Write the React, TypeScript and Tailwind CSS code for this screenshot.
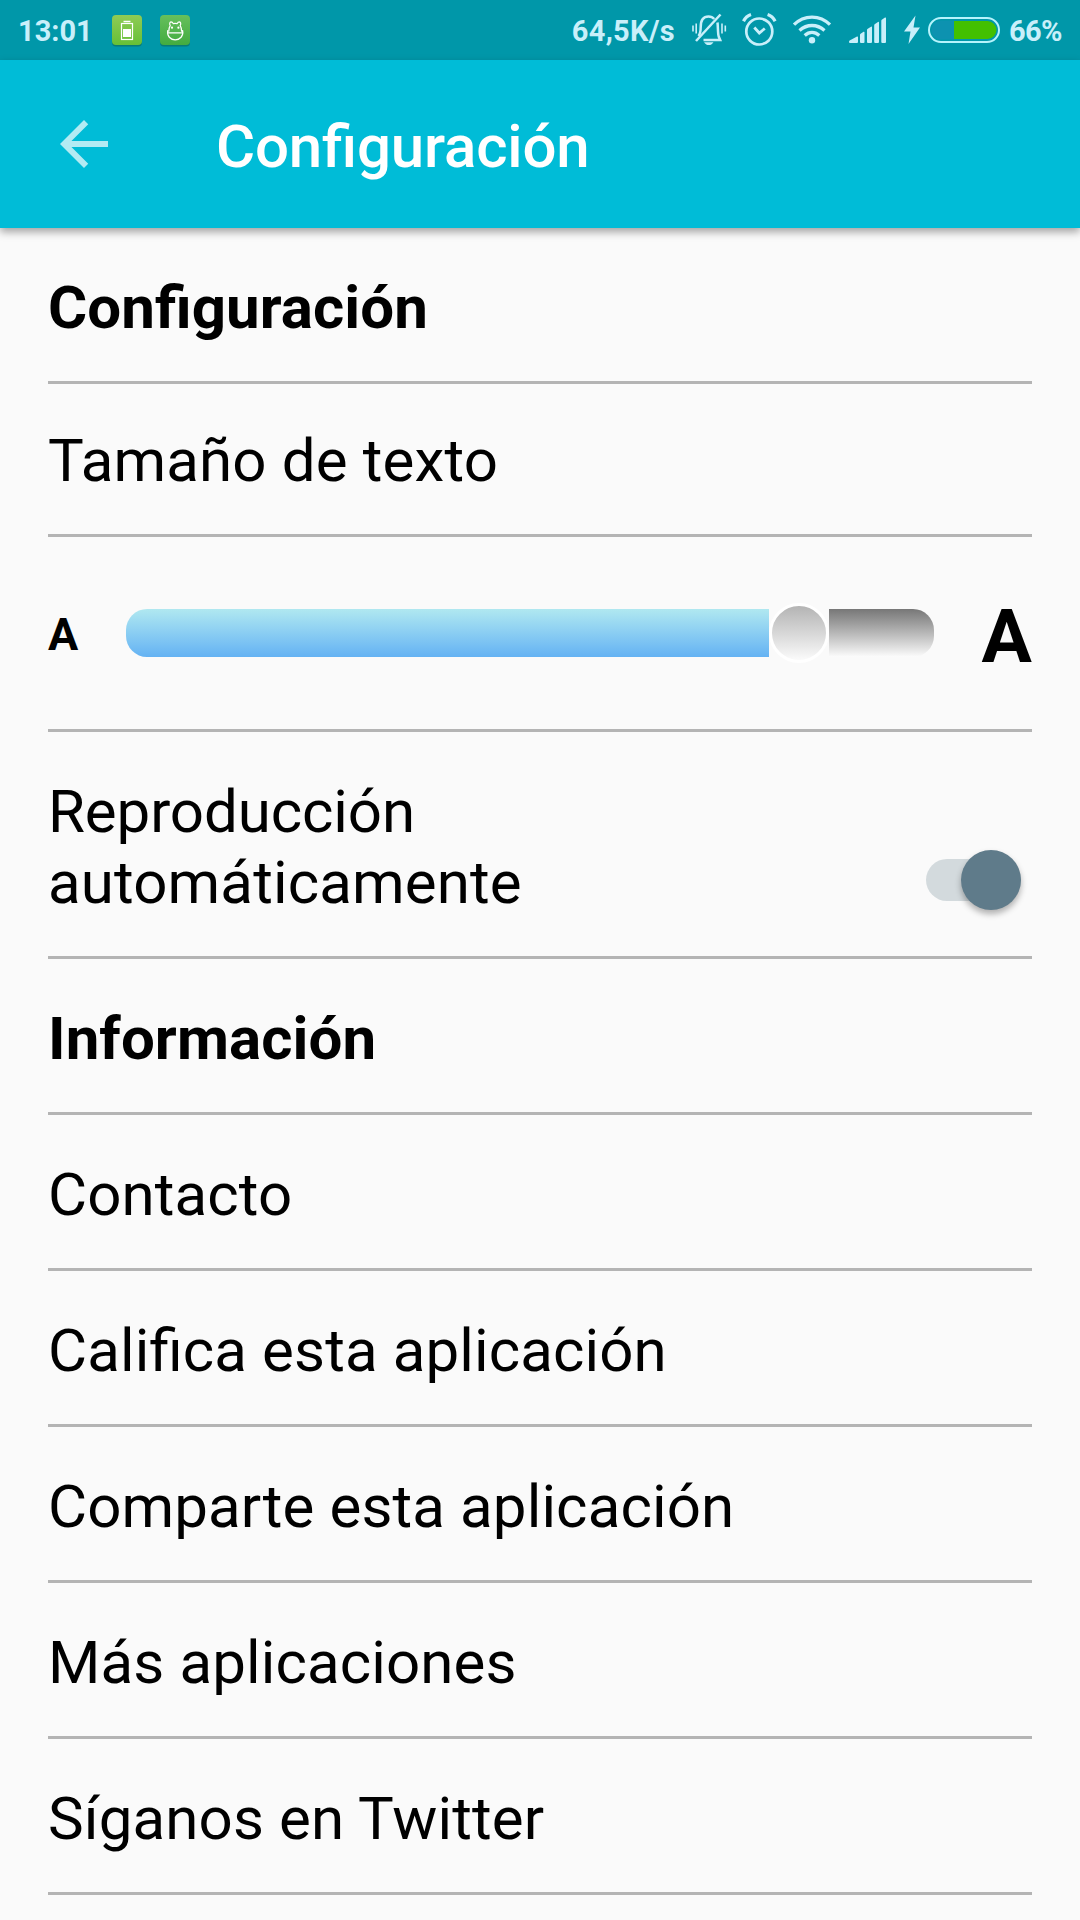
import { useState } from 'react';

const FG = '#c9effa';

function BatteryAppIcon() {
    return (
        <svg width="32" height="34" viewBox="0 0 32 34" className="ml-5 mt-[1px]">
            <defs>
                <linearGradient id="batteryApp" x1="0" y1="0" x2="0" y2="1">
                    <stop offset="0" stopColor="#8fcb55" />
                    <stop offset="1" stopColor="#66c036" />
                </linearGradient>
            </defs>
            <rect x="1" y="2.5" width="30" height="30" rx="4" fill="#0b6f63" opacity="0.7" />
            <rect x="1" y="1" width="30" height="30" rx="4" fill="url(#batteryApp)" />
            <path d="M12.5 7.5h7" stroke="#fff" strokeWidth="1.5" />
            <rect x="10.5" y="9.5" width="11" height="16" fill="none" stroke="#fff" strokeWidth="1.2" />
            <rect x="12" y="15" width="8" height="8" fill="#fff" />
        </svg>
    );
}

function DroidAppIcon() {
    return (
        <svg width="32" height="34" viewBox="0 0 32 34" className="ml-4 mt-[1px]">
            <defs>
                <linearGradient id="droidApp" x1="0" y1="0" x2="0" y2="1">
                    <stop offset="0" stopColor="#66bf5c" />
                    <stop offset="1" stopColor="#43ac40" />
                </linearGradient>
            </defs>
            <rect x="1" y="2.5" width="30" height="30" rx="4" fill="#0b6f63" opacity="0.7" />
            <rect x="1" y="1" width="30" height="30" rx="4" fill="url(#droidApp)" />
            <g fill="none" stroke="#fff" strokeWidth="1.2" strokeLinejoin="round" strokeLinecap="round">
                <path d="M9.8 17.200c0-2.500.5-4.200 1.400-5.600C10.300 9.800 10.600 8 12 7.900c1 0 1.800.7 2.200 1.700 1.300-.4 2.700-.4 4 0 .4-1 1.200-1.700 2.200-1.700 1.400.1 1.700 1.900.8 3.700.9 1.400 1.400 3.100 1.400 5.600" />
                <path d="M8.800 16.500c-1.200 5.500 2.800 9.400 7.400 9.400s8.600-3.900 7.400-9.400" />
                <path d="M8.700 18.900h15" />
            </g>
            <circle cx="13" cy="13.700" r="1.100" fill="#fff" />
            <circle cx="19.400" cy="13.700" r="1.100" fill="#fff" />
        </svg>
    );
}

function MutedBellIcon() {
    return (
        <svg width="36" height="36" viewBox="0 0 36 36" className="ml-4" fill="none" stroke={FG}>
            <path d="M2 13.500v6M5.200 11.500v10M31 11.500v10M34.300 13.500v6" strokeWidth="1.600" />
            <path
                d="M7.500 24c1.800-2 2.200-4.500 2.200-9 0-6.500 2.800-10.500 7.800-10.500 2.500 0 4.300.8 5.700 2.500M26.500 10.500c.6 5 .2 10.500 1.200 14l1.500 3.500H12.500"
                strokeWidth="2.500"
            />
            <path d="M29.500 2.500L5 29" strokeWidth="2.500" />
            <path d="M13 30.200h9.500c-1.400 2.100-2.800 2.800-4.700 2.800s-3.300-.7-4.800-2.800z" fill={FG} stroke="none" />
        </svg>
    );
}

function AlarmIcon() {
    return (
        <svg width="36" height="36" viewBox="0 0 36 36" className="ml-[14px]" fill="none" stroke={FG}>
            <circle cx="18.300" cy="19.500" r="13" strokeWidth="2.700" />
            <path d="M13.300 15.500l5 5.500 5.500-4.500" strokeWidth="2.800" />
            <path d="M2.500 9.200c1.500-3.100 4-5.500 7.500-6.700M26.600 2.500c3.500 1.200 6 3.600 7.500 6.700" strokeWidth="3.200" />
        </svg>
    );
}

function WifiIcon() {
    return (
        <svg width="40" height="32" viewBox="0 0 40 32" className="ml-[15px]" fill="none" stroke={FG} strokeWidth="3.300">
            <path d="M2 10.700C12 .5 28 .5 38 10.700" />
            <path d="M7.500 16.500c7.500-6.700 17.500-6.700 25 0" />
            <path d="M12.700 21.500c4.400-4 10.200-4 14.600 0" />
            <circle cx="20" cy="26.200" r="3.200" fill={FG} stroke="none" />
        </svg>
    );
}

function SignalIcon() {
    return (
        <svg width="38" height="28" viewBox="0 0 38 28" className="ml-[17px]" fill={FG}>
            <path d="M0 26c0-1.500 1-2 2.500-2.500L8 20.500q1-.4 1 .7V26q0 1-1 1H1q-1 0-1-1z" />
            <path d="M11 18.800q0-.9 1-1.400l2.500-1.600q1-.5 1 .6V26q0 1-1 1H12q-1 0-1-1z" />
            <path d="M18 14.100q0-.9.800-1.400l3.200-2q1-.5 1 .6V26q0 1-1 1h-3q-1 0-1-1z" />
            <path d="M25.200 9.400q0-.9.800-1.400l3-2q1-.5 1 .6V26q0 1-1 1h-2.800q-1 0-1-1z" />
            <path d="M32.300 4.900q0-.9.800-1.400l2.900-1.900q1-.5 1 .6V26q0 1-1 1h-2.700q-1 0-1-1z" />
        </svg>
    );
}

function BoltIcon() {
    return (
        <svg width="18" height="30" viewBox="0 0 18 30" className="ml-[16px]" fill={FG}>
            <path d="M12.500.5L1 16.500h6.500L5.500 29 17 12.500h-6.500z" />
        </svg>
    );
}

function BatteryIcon() {
    return (
        <svg width="72" height="26" viewBox="0 0 72 26" className="ml-[7px]">
            <rect x="1" y="1" width="70" height="24" rx="12" fill="none" stroke="#b5f3fc" strokeWidth="2" />
            <path d="M26 3.500H13a9.500 9.500 0 0 0 0 19h13z" fill="#0d92b0" />
            <path d="M26 4h33.500a9 9 0 0 1 0 18H26z" fill="#43c000" />
        </svg>
    );
}

function StatusBar() {
    return (
        <div className="flex h-[60px] items-center bg-[#0097a9] pl-[18px] pr-[18px] text-[29px] font-bold text-[#c9effa]">
            <span className="w-[73px] whitespace-nowrap leading-[60px] pt-[2px]">13:01</span>
            <BatteryAppIcon />
            <DroidAppIcon />
            <div className="ml-auto flex items-center">
                <span className="whitespace-nowrap leading-[60px] pt-[2px] tracking-[0.3px]">64,5K/s</span>
                <MutedBellIcon />
                <AlarmIcon />
                <WifiIcon />
                <SignalIcon />
                <BoltIcon />
                <BatteryIcon />
                <span className="ml-[9px] w-[53px] whitespace-nowrap leading-[60px] pt-[2px] tracking-[-0.6px]">66%</span>
            </div>
        </div>
    );
}

function Toolbar() {
    return (
        <header className="relative flex h-[168px] items-center bg-[#00bcd7] pl-12 shadow-[0_4px_8px_rgba(0,0,0,0.35)]">
            <svg width="72" height="72" viewBox="0 0 24 24" fill="#fff" opacity="0.7">
                <path d="M20 11H7.830l5.590-5.590L12 4l-8 8 8 8 1.410-1.410L7.830 13H20v-2z" />
            </svg>
            <h1 className="ml-24 pt-[5px] text-[60px] font-medium leading-[70px] tracking-[-0.17px] text-white">
                Configuración
            </h1>
        </header>
    );
}

function SectionTitle({ label }: { label: string }) {
    return (
        <h2 className="h-[156px] border-b-[3px] border-[#b4b4b4] pt-11 text-[60px] font-bold leading-[71px] tracking-[0.08px]">
            {label}
        </h2>
    );
}

function TextSizeSlider() {
    return (
        <div className="flex h-[195px] items-start border-b-[3px] border-[#b4b4b4] font-bold">
            <span className="w-[78px] pt-[71px] text-[45px] leading-[53px]">A</span>
            <div className="flex h-[60px] w-[808px] items-center mt-[66px]">
                <div className="h-12 w-[643px] rounded-l-[21px] bg-linear-to-b from-[#b0e8f0] to-[#64b2f3]" />
                <div className="h-[60px] w-[60px] rounded-full border-[3px] border-white bg-linear-to-b from-[#b0b0b0] to-white bg-origin-border" />
                <div className="h-12 w-[105px] rounded-r-[21px] bg-linear-to-b from-[#777] to-[#fcfcfc]" />
            </div>
            <span className="ml-auto pt-[55px] text-[75px] leading-[88px]">A</span>
        </div>
    );
}

function AutoPlayRow() {
    const [enabled, setEnabled] = useState(true);

    return (
        <div className="flex h-[227px] justify-between border-b-[3px] border-[#b4b4b4] pt-11">
            <span className="w-[600px] text-[60px] leading-[71px]">
                <span className="tracking-[-0.1px]">Reproducción</span>{' '}
                <span className="tracking-[0.15px]">automáticamente</span>
            </span>
            <button
                type="button"
                role="switch"
                aria-checked={enabled}
                onClick={() => setEnabled(!enabled)}
                className={`mr-[11px] mt-[83px] flex h-[42px] w-[95px] items-center rounded-full bg-[#d3dadd] ${enabled ? 'justify-end' : 'justify-start'}`}
            >
                <span className="h-[60px] w-[60px] shrink-0 rounded-full bg-[#5f7b8a] shadow-[0_4px_6px_rgba(0,0,0,0.3)]" />
            </button>
        </div>
    );
}

const infoItems = [
    'Contacto',
    'Califica esta aplicación',
    'Comparte esta aplicación',
    'Más aplicaciones',
    'Síganos en Twitter',
];

export default function App() {
    return (
        <div className="h-[1920px] w-[1080px] overflow-hidden bg-[#fafafa] font-[Roboto,sans-serif] text-black [font-feature-settings:'liga']">
            <StatusBar />
            <Toolbar />
            <main className="px-12">
                <SectionTitle label="Configuración" />
                <div className="h-[153px] border-b-[3px] border-[#b4b4b4] pt-[41px] text-[60px] leading-[71px] tracking-[0.16px]">
                    Tamaño de texto
                </div>
                <TextSizeSlider />
                <AutoPlayRow />
                <SectionTitle label="Información" />
                {infoItems.map((item) => (
                    <div
                        key={item}
                        className="h-[156px] border-b-[3px] border-[#b4b4b4] pt-11 text-[60px] leading-[71px] tracking-[0.13px]"
                    >
                        {item}
                    </div>
                ))}
            </main>
        </div>
    );
}
